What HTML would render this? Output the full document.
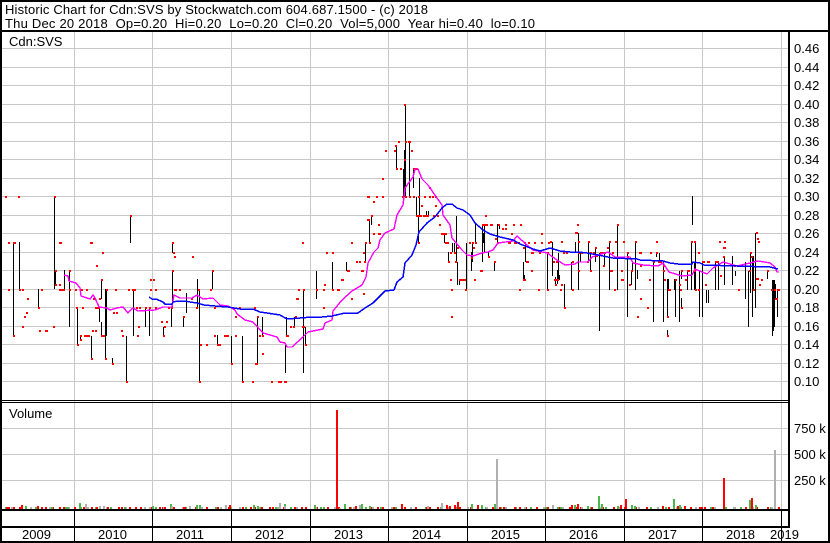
<!DOCTYPE html>
<html><head><meta charset="utf-8"><style>
html,body{margin:0;padding:0;background:#fff;width:830px;height:543px;overflow:hidden}
svg{display:block}
text{font-family:"Liberation Sans",Arial,sans-serif;font-size:13px;fill:#000;white-space:pre}
.c{shape-rendering:crispEdges;fill:none}
</style></head><body>
<svg width="830" height="543" viewBox="0 0 830 543" xmlns="http://www.w3.org/2000/svg">
<rect width="830" height="543" fill="#fff"/>
<g class="c" stroke="#c8c8c8" transform="translate(0,.5)">
<path d="M2 48H788M2 67H788M2 85H788M2 104H788M2 122H788M2 141H788M2 159H788M2 178H788M2 196H788M2 215H788M2 233H788M2 252H788M2 270H788M2 289H788M2 307H788M2 326H788M2 344H788M2 363H788M2 381H788M2 428H788M2 454H788M2 480H788"/>
</g>
<g class="c" stroke="#c8c8c8" transform="translate(.5,0)">
<path d="M74 31V510M152 31V510M231 31V510M310 31V510M388 31V510M467 31V510M545 31V510M624 31V510M702 31V510M781 31V510"/>
</g>
<g class="c" stroke="#000" transform="translate(.5,0)">
<path d="M13 242V336M19 242V290M38 289V308M54 196V289M55 270V285M64 270V289M69 270V327M77 307V345M80 337V340M91 336V359M99 308V322M101 279V299M101 322V336M105 289V359M106 289V336M112 358V364M126 336V382M130 216V243M133 289V336M145 308V327M149 307V336M163 327V336M171 307V327M172 242V253M172 270V307M183 317V327M186 293V313M197 279V308M199 289V382M212 270V289M217 335V345M231 336V364M242 336V382M257 317V363M262 317V336"/>
<path d="M285 343V373M286 317V337M294 317V327M303 290V373M305 327V345M316 271V299M332 262V290M346 262V271M365 243V262M369 220V243M371 216V225M396 146V169M403 169V197M404 150V197M405 105V197M409 142V197M413 169V188M416 197V216M418 216V243M419 178V216M426 211V216M428 211V216M444 233V243M448 252V262M452 243V252M454 243V252M456 216V262M457 262V285M459 280V285M466 243V290M471 252V271M472 243V262M475 224V243M482 224V262M483 233V243M484 224V252M488 252V258M494 262V271M497 224V243M499 224V229M523 262V280M524 275V280M525 243V262M547 252V290"/>
<path d="M552 242V276M555 277V285M557 270V284M558 253V280M559 275V280M564 284V308M571 262V290M575 242V252M578 233V290M580 252V262M588 242V262M590 253V271M595 248V262M599 253V331M604 253V266M609 242V290M617 224V290M627 253V317M631 270V285M632 262V270M635 242V290M637 270V279M653 262V322M656 253V257M659 253V262M663 262V322M667 279V317M668 279V290M667 330V336M674 279V290M675 279V317M679 271V322M681 271V279M681 298V308M687 271V290M691 242V290M692 196V225M694 262V290M695 242V290M699 271V317M702 262V317M706 290V303M708 290V303M715 262V290M718 262V290M724 256V285M732 256V285M735 271V276M745 262V299M748 271V327M750 253V293M752 256V317M753 256V290M755 233V308M767 271V279M772 280V336M773 280V331M774 280V327M775 284V299M777 290V317"/>
</g>
<g transform="translate(-1,0)">
<path class="c" stroke="#f00" stroke-width="2" d="M6 197h2M19 197h2M55 197h2M9 243h2M14 243h3M60 243h3M91 243h3M103 253h2M97 266h2M131 216h2M173 243h2M174 253h2M175 257h2M193 257h2M56 271h2M70 271h2M173 271h2M213 271h2M102 280h2M151 280h2M154 280h2M56 285h2M60 285h2M9 290h2M20 290h2M23 290h2M42 290h2M60 290h6M70 290h2M76 290h2M82 290h2M87 290h2M107 290h2M116 290h2M129 290h2M133 290h4M151 290h2M156 290h2M175 290h3M180 290h2M199 290h2M211 290h2M28 299h2M94 299h2M100 299h2M192 299h2M39 308h2M77 308h2M83 308h2M96 308h5M137 308h2M140 308h2M146 308h2M150 308h2M156 308h2M169 308h2M172 308h2M197 308h2M215 308h2M240 308h2M255 308h2M27 313h2M114 313h2M117 313h2M25 317h2M236 317h2M184 317h2M258 317h2M23 327h2M54 327h2M139 327h2M165 327h2M40 331h2M46 331h3M93 331h2M96 331h2M122 331h2M162 322h2M167 322h2M14 336h2M81 336h2M85 336h6M102 336h4M123 336h2M138 336h2M164 336h2M215 336h2M225 336h5M236 336h2M260 336h2M263 336h2M81 340h2M78 345h2M201 345h2M207 345h2M218 345h4M263 354h2M92 359h2M106 359h2M113 364h2M232 364h2M256 364h3M127 382h2M200 382h2M243 382h2M253 382h2M272 382h2M279 382h2"/>
<path class="c" stroke="#f00" stroke-width="2" d="M281 382h2M285 382h3M287 336h3M291 327h2M294 327h2M303 327h3M296 317h2M306 345h2M297 299h3M299 290h2M304 290h2M317 290h2M324 290h2M333 290h2M338 290h3M324 308h2M352 299h2M364 294h2M325 285h2M342 280h3M348 271h3M362 271h3M357 262h2M360 262h2M365 262h2M303 243h2M327 253h2M333 253h2M352 243h2M364 253h2M366 243h2M370 243h2M368 220h3M372 216h2M379 225h2M374 234h2M379 234h3M383 179h2M374 202h2M368 197h3M377 197h2M383 197h2M386 151h2M395 151h2M396 146h2M399 142h2M406 142h2M409 142h3M412 151h2M405 105h2M405 160h2M397 169h2M401 169h2M414 169h5M403 197h2M406 197h2M410 197h2M414 197h2M419 197h2M425 197h2M430 197h2M433 197h2M436 197h2M430 188h2M422 206h2M436 206h2M417 216h6M424 216h6M434 216h2M438 216h2M440 225h2M442 234h6M419 243h2M446 243h4M458 248h2M451 253h2M455 253h2M449 262h2M456 262h2M451 280h2M460 280h7M475 280h2M452 290h2M466 290h2M452 317h2M470 243h2M473 243h2M476 243h2M474 248h2M472 258h2M481 271h3M486 216h2M483 225h6M491 225h3M499 225h2M506 225h2M514 225h2M521 225h2M503 229h2M506 229h2M512 234h2M542 234h2M496 239h2M489 257h2M495 262h2M498 243h2M509 243h3M515 243h3M519 243h2M525 243h2M529 243h2M535 243h2M542 243h2M549 243h2M524 248h2M532 253h3M540 253h2M548 253h2M527 262h3M532 271h2M524 280h3M520 290h2M539 290h2M548 290h2"/>
<path class="c" stroke="#f00" stroke-width="2" d="M551 242h2M554 262h2M557 262h2M555 280h5M562 285h2M556 285h2M561 290h2M565 308h2M562 242h2M564 253h2M567 253h2M573 290h2M573 262h2M576 233h3M578 225h2M579 242h2M579 253h2M579 271h2M582 253h2M588 262h2M589 242h2M591 253h2M591 271h2M594 253h2M596 248h2M597 256h2M601 253h6M604 266h2M608 248h2M610 242h2M611 271h3M613 253h2M615 290h2M616 242h2M618 225h2M622 271h2M622 280h3M624 242h2M628 253h2M628 257h2M630 285h2M632 271h2M636 242h2M638 317h2M640 253h3M641 299h2M648 308h2M641 266h2M650 280h2M651 253h2M654 262h2M657 242h2M657 253h2M659 262h4M664 266h2M664 271h2M665 280h2M668 317h2M668 336h2M669 290h3M676 280h2M680 285h2M681 290h2M682 271h2M682 308h2M686 280h2M688 271h3M692 242h2M695 242h2M695 271h2M696 290h2M699 253h2M699 290h2M703 262h3M706 285h2M708 262h3M716 262h3M718 262h2M721 276h2M720 242h2M725 242h2M724 248h3M724 257h2M735 266h2M739 290h2M750 271h2M751 253h2M752 257h2M754 290h2M757 233h2M758 239h2M759 242h2M757 279h3M760 285h2M762 280h2M768 271h2M772 290h2M776 299h3M778 290h3M775 290h2"/>
</g>
<polyline class="c" stroke="#ff00ff" stroke-width="1.4" points="64,275 68,276 69,281 76,283 80,288 81,296 90,299 93,295 95,298 99,307 107,308 110,310 117,308 123,307 128,313 133,308 138,311 155,310 163,307 172,307 174,295 180,298 192,298 197,295 203,299 213,298 220,305 228,306 235,310 237,314 245,320 253,322 263,333 277,337 280,342 285,343 287,347 292,347 303,337 308,332 323,329 325,323 332,320 333,311 342,300 352,291 362,285 366,277 368,263 374,252 378,248 380,240 385,233 394,229 397,215 403,205 405,188 413,177 415,169 418,169 422,179 428,185 437,198 442,205 443,215 450,225 452,238 462,250 467,255 473,256 482,253 488,252 493,250 498,243 513,241 517,236 527,245 533,250 547,253 550,255 557,260 565,265 575,264 578,262 588,262 592,257 608,252 615,257 630,257 633,263 643,265 658,266 663,263 669,272 682,276 692,275 695,269 707,274 713,268 723,262 737,266 750,263 758,261 770,263 775,267 777,272 779,272"/>
<polyline class="c" stroke="#0000ff" stroke-width="1.5" points="149,297 152,299 156,299 163,302 165,304 172,304 173,302 178,301 185,301 190,302 197,303 204,305 215,306 228,307 240,309 253,309 260,312 267,313 280,315 287,319 300,318 312,317 322,317 332,316 345,313 358,313 365,308 373,303 380,296 385,291 394,290 397,282 403,277 405,263 412,255 416,245 419,232 427,223 435,217 442,208 447,204 452,204 457,208 463,210 470,215 475,223 483,230 490,234 500,237 513,240 520,244 533,249 540,251 550,248 560,251 570,252 578,252 587,253 598,255 613,258 637,259 640,260 663,261 670,263 678,264 692,264 693,262 700,263 704,265 737,266 770,267 778,269"/>
<g class="c" stroke-width="2">
<path stroke="#4cb84c" stroke-dasharray="2 13" d="M5 508H780"/>
<path stroke="#f00" stroke-dasharray="2 9" d="M8 508H780"/>
<path stroke="#b0b0b0" stroke-dasharray="2 17" d="M11 508H780"/>
<path stroke="#f00" d="M7 511V507M14 511V507M22 511V505M38 511V506M46 511V507M60 511V507M84 511V507M92 511V507M108 511V507M122 511V507M136 511V507M160 511V507M165 511V507M184 511V507M197 511V506M230 511V505M243 511V507M255 511V507M262 511V507M270 511V507M302 511V507M315 511V507M337 511V410M356 511V506M370 511V507M378 511V507M402 511V504M430 511V507M447 511V505M450 511V506M455 511V505M458 511V502M478 511V505M500 511V507M520 511V507M572 511V505M577 511V507M578 511V504M621 511V505M626 511V499M663 511V506M678 511V506M685 511V506M700 511V507M705 511V507M724 511V478M735 511V507M752 511V498"/>
<path stroke="#4cb84c" d="M26 511V506M52 511V507M68 511V507M80 511V503M125 511V507M153 511V506M171 511V504M197 511V505M200 511V505M254 511V505M258 511V506M285 511V504M315 511V505M324 511V507M345 511V504M362 511V504M370 511V506M472 511V504M482 511V505M495 511V504M558 511V507M575 511V505M588 511V506M599 511V496M602 511V504M618 511V506M632 511V505M635 511V506M674 511V499M680 511V505M750 511V500M756 511V505"/>
<path stroke="#b0b0b0" d="M86 511V504M100 511V506M104 511V506M145 511V507M150 511V507M172 511V506M190 511V506M226 511V505M280 511V503M285 511V506M340 511V508M360 511V505M428 511V506M442 511V503M497 511V459M553 511V505M735 511V507M775 511V450"/>
</g>
<g shape-rendering="crispEdges" fill="#000">
<rect x="0" y="0" width="830" height="2"/>
<rect x="0" y="0" width="2" height="543"/>
<rect x="828" y="0" width="2" height="543"/>
<rect x="0" y="541" width="830" height="2"/>
<rect x="0" y="30" width="830" height="2"/>
<rect x="788" y="30" width="2" height="497"/>
<rect x="0" y="400" width="790" height="1"/>
<rect x="0" y="402" width="790" height="1"/>
<rect x="0" y="509" width="790" height="2"/>
<rect x="0" y="526" width="790" height="2"/>
<path d="M74 511h1v30h-1zM152 511h1v30h-1zM231 511h1v30h-1zM310 511h1v30h-1zM388 511h1v30h-1zM467 511h1v30h-1zM545 511h1v30h-1zM624 511h1v30h-1zM702 511h1v30h-1zM781 511h1v30h-1z"/>
</g>
<text x="5" y="14" textLength="423" lengthAdjust="spacing">Historic Chart for Cdn:SVS by Stockwatch.com 604.687.1500 - (c) 2018</text>
<text x="5" y="28" textLength="530" lengthAdjust="spacing">Thu Dec 20 2018  Op=0.20  Hi=0.20  Lo=0.20  Cl=0.20  Vol=5,000  Year hi=0.40  lo=0.10</text>
<text x="9" y="46">Cdn:SVS</text>
<text x="9" y="418">Volume</text>
<text x="794" y="53">0.46</text><text x="794" y="72">0.44</text><text x="794" y="90">0.42</text><text x="794" y="109">0.40</text><text x="794" y="127">0.38</text><text x="794" y="146">0.36</text><text x="794" y="164">0.34</text><text x="794" y="183">0.32</text><text x="794" y="201">0.30</text><text x="794" y="220">0.28</text><text x="794" y="238">0.26</text><text x="794" y="257">0.24</text><text x="794" y="275">0.22</text><text x="794" y="294">0.20</text><text x="794" y="312">0.18</text><text x="794" y="331">0.16</text><text x="794" y="349">0.14</text><text x="794" y="368">0.12</text><text x="794" y="386">0.10</text>
<text x="794" y="433">750 k</text><text x="794" y="459">500 k</text><text x="794" y="485">250 k</text>
<text x="22" y="539">2009</text><text x="98" y="539">2010</text><text x="176" y="539">2011</text><text x="255" y="539">2012</text><text x="334" y="539">2013</text><text x="412" y="539">2014</text><text x="491" y="539">2015</text><text x="569" y="539">2016</text><text x="648" y="539">2017</text><text x="726" y="539">2018</text><text x="770" y="539">2019</text>
</svg>
</body></html>
